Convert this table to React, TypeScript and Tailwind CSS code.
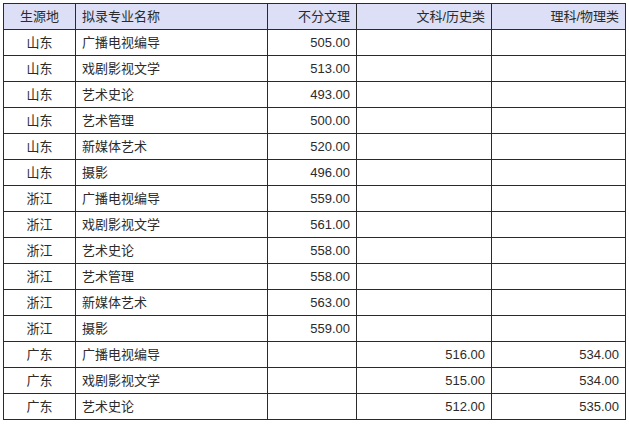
import React from "react";

type Row = [string, string, string, string, string];

const rows: Row[] = [
  ["山东", "广播电视编导", "505.00", "", ""],
  ["山东", "戏剧影视文学", "513.00", "", ""],
  ["山东", "艺术史论", "493.00", "", ""],
  ["山东", "艺术管理", "500.00", "", ""],
  ["山东", "新媒体艺术", "520.00", "", ""],
  ["山东", "摄影", "496.00", "", ""],
  ["浙江", "广播电视编导", "559.00", "", ""],
  ["浙江", "戏剧影视文学", "561.00", "", ""],
  ["浙江", "艺术史论", "558.00", "", ""],
  ["浙江", "艺术管理", "558.00", "", ""],
  ["浙江", "新媒体艺术", "563.00", "", ""],
  ["浙江", "摄影", "559.00", "", ""],
  ["广东", "广播电视编导", "", "516.00", "534.00"],
  ["广东", "戏剧影视文学", "", "515.00", "534.00"],
  ["广东", "艺术史论", "", "512.00", "535.00"],
];

const font = {
  fontFamily: '"Liberation Sans", "Noto Sans CJK SC", sans-serif',
};

export default function App() {
  const cell = "border border-[#2a2a2a] px-[6px] h-[26px] p-0 text-[13px] leading-none text-[#2b2b2b]";
  return (
    <div className="w-[629px] h-[425px] bg-white pt-[3px] pl-[3px]" style={font}>
      <table className="border-collapse table-fixed w-[622px]">
        <colgroup>
          <col className="w-[72px]" />
          <col className="w-[192px]" />
          <col className="w-[89px]" />
          <col className="w-[135px]" />
          <col className="w-[134px]" />
        </colgroup>
        <thead>
          <tr className="bg-[#dcdff5]">
            <th className={`${cell} font-normal text-center`}>生源地</th>
            <th className={`${cell} font-normal text-left`}>拟录专业名称</th>
            <th className={`${cell} font-normal text-right`}>不分文理</th>
            <th className={`${cell} font-normal text-right`}>文科/历史类</th>
            <th className={`${cell} font-normal text-right`}>理科/物理类</th>
          </tr>
        </thead>
        <tbody>
          {rows.map((r, i) => (
            <tr key={i}>
              <td className={`${cell} text-center`}>{r[0]}</td>
              <td className={`${cell} text-left`}>{r[1]}</td>
              <td className={`${cell} text-right`}>{r[2]}</td>
              <td className={`${cell} text-right`}>{r[3]}</td>
              <td className={`${cell} text-right`}>{r[4]}</td>
            </tr>
          ))}
        </tbody>
      </table>
    </div>
  );
}
